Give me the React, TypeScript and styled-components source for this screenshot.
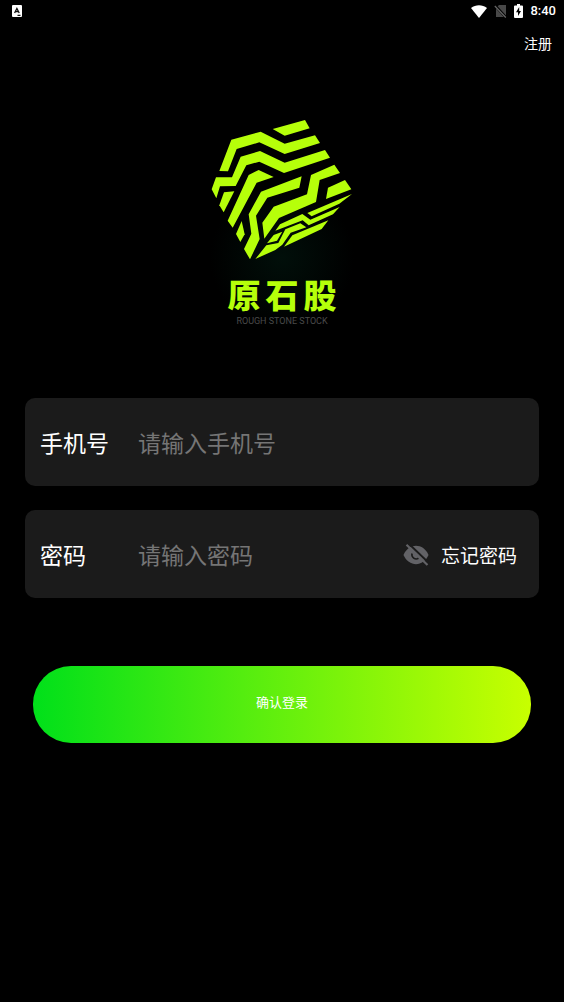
import React, { useState } from "react";
import styled, { createGlobalStyle } from "styled-components";

const GlobalStyle = createGlobalStyle`
  * { box-sizing: border-box; }
  body {
    margin: 0;
    background: #000;
    color: #fff;
    font-family: Roboto, "Noto Sans CJK SC", sans-serif;
  }
`;

const Page = styled.div`
  min-height: 100vh;
  display: flex;
  flex-direction: column;
`;

const StatusBar = styled.div`
  display: flex;
  align-items: center;
  justify-content: space-between;
  height: 22px;
  padding: 0 8px 0 12px;
`;

const StatusGroup = styled.div`
  display: flex;
  align-items: center;
  gap: 7px;
`;

const Clock = styled.time`
  font-size: 13px;
  line-height: 22px;
  font-weight: 500;
`;

const Header = styled.header`
  display: flex;
  justify-content: flex-end;
  height: 44px;
  padding: 12px 12px 0;
`;

const TextLink = styled.a<{ $size: number }>`
  flex: none;
  color: #fff;
  font-size: ${(p) => p.$size}px;
  line-height: 20px;
  text-decoration: none;
`;

const Brand = styled.div`
  display: flex;
  flex-direction: column;
  align-items: center;
  padding-top: 49px;
  background: radial-gradient(circle at 50% 192px, #010f0a 0, #000 72px);
`;

const BrandName = styled.h1`
  display: flex;
  gap: 5px;
  margin: 9px 0 0;
  color: #b6ff0a;
  font-size: 33px;
  line-height: 40px;
  font-weight: 900;
  font-family: "Noto Sans CJK SC", sans-serif;
`;

const BrandCaption = styled.p`
  margin: 0;
  color: #4a4a4a;
  font-size: 9px;
  line-height: 14px;
`;

const Form = styled.form`
  display: flex;
  flex-direction: column;
  gap: 24px;
  padding: 70px 25px 0;
`;

const Field = styled.div`
  display: flex;
  align-items: center;
  height: 88px;
  padding: 5px 22px 0 15px;
  border-radius: 10px;
  background: #1b1b1b;
`;

const FieldLabel = styled.label`
  flex: none;
  width: 98px;
  font-size: 23px;
  line-height: 32px;
`;

const FieldInput = styled.input`
  flex: 1;
  min-width: 0;
  height: 40px;
  padding: 0;
  border: 0;
  outline: 0;
  background: transparent;
  color: #fff;
  font: inherit;
  font-size: 23px;
  &::placeholder {
    color: #757575;
    opacity: 1;
  }
`;

const IconButton = styled.button`
  display: flex;
  flex: none;
  margin-right: 12px;
  padding: 0 0 4px;
  border: 0;
  background: none;
`;

const SubmitButton = styled.button`
  height: 77px;
  margin: 44px 8px 0;
  padding: 0 0 6px;
  border: 0;
  border-radius: 38px;
  background: linear-gradient(90deg, #00e01a, #c8ff00);
  color: #fff;
  font: inherit;
  font-size: 13px;
`;

const logoShapes = [
  "203,42 300,15 314,40 239,62",
  "79,74 167,50 239,86 330,61 345,84 239,117 163,82 95,102 69,169 43,168",
  "33,187 81,187 107,125 165,108 239,143 360,105 375,128 237,174 163,140 124,151 92,213 45,214 34,250 20,223",
  "68,317 131,180 161,165 206,186 155,203 83,338",
  "57,232 88,229 56,292 43,271",
  "93,357 110,318 119,358 106,381",
  "290,184 283,218 187,248 153,302 164,372 135,433 117,402 139,356 131,298 168,230",
  "318,180 388,149 405,174 344,195 333,261 222,309 178,371 172,323 206,275 306,238",
  "369,218 420,195 439,223 363,252",
  "307,294 441,237 403,266 320,304",
  "225,328 292,297 316,314 404,276 384,298 311,331 293,316 211,347",
  "151,432 184,391 220,384 241,343 286,325 304,337 257,353 232,389 211,405",
  "186,385 206,360 232,350 216,377",
  "237,395 262,361 370,316 350,342",
];

const Logo = () => (
  <svg width="155" height="150" viewBox="0 0 465 450" fill="#b6ff0a" aria-hidden="true">
    {logoShapes.map((points) => (
      <polygon key={points} points={points} />
    ))}
  </svg>
);

const AppIcon = () => (
  <svg width="10" height="12" viewBox="0 0 10 12" aria-hidden="true">
    <rect width="10" height="12" rx="1" fill="#fff" />
    <path d="M2.6 8 4.9 3.4 7.2 8M3.6 6.6h2.8M5.5 10.4h3" fill="none" stroke="#111" strokeWidth="1.3" />
  </svg>
);

const WifiIcon = () => (
  <svg width="16" height="13" viewBox="0 0 16 13" fill="#fff" aria-hidden="true">
    <path d="M0 3C4.700-.6 11.300-.6 16 3L8 13z" />
  </svg>
);

const NoSimIcon = () => (
  <svg width="13" height="14" viewBox="0 0 13 14" aria-hidden="true">
    <path d="M5 1h7v12H2V4z" fill="#484848" />
    <path d="M1 1.500 12 13.500" stroke="#000" strokeWidth="2.600" />
    <path d="M.8 2 11.800 13.500" stroke="#666" strokeWidth="1.200" />
  </svg>
);

const BatteryIcon = () => (
  <svg width="9" height="14" viewBox="0 0 9 14" aria-hidden="true">
    <path d="M3 0h3v1.500h2q1 0 1 1V13q0 1-1 1H1q-1 0-1-1V2.500q0-1 1-1h2z" fill="#fff" />
    <path d="M5.200 3 2 8.300h2v3.700L7 7H5.200z" fill="#000" />
  </svg>
);

const EyeOffIcon = () => (
  <svg width="26" height="22" viewBox="0 0 26 22" aria-hidden="true">
    <path d="M.5 11C3 5 8 1.800 13 1.800S23 5 25.500 11C23 17 18 20.200 13 20.200S3 17 .5 11z" fill="#626266" />
    <path d="M9 9.500a4.400 4.400 0 0 0 6.500 4.800" fill="none" stroke="#1b1b1b" strokeWidth="1.600" />
    <path d="M5-1 27 20" stroke="#1b1b1b" strokeWidth="2" />
    <path d="M3.500.8 24.500 21" stroke="#626266" strokeWidth="2.200" />
  </svg>
);

export default function App() {
  const [visible, setVisible] = useState(false);
  return (
    <Page>
      <GlobalStyle />
      <StatusBar>
        <AppIcon />
        <StatusGroup>
          <WifiIcon />
          <NoSimIcon />
          <BatteryIcon />
          <Clock>8:40</Clock>
        </StatusGroup>
      </StatusBar>
      <Header>
        <TextLink href="#register" $size={14}>注册</TextLink>
      </Header>
      <main>
        <Brand>
          <Logo />
          <BrandName>
            <span>原</span>
            <span>石</span>
            <span>股</span>
          </BrandName>
          <BrandCaption>ROUGH STONE STOCK</BrandCaption>
        </Brand>
        <Form onSubmit={(e) => e.preventDefault()}>
          <Field>
            <FieldLabel htmlFor="phone">手机号</FieldLabel>
            <FieldInput id="phone" type="tel" placeholder="请输入手机号" />
          </Field>
          <Field>
            <FieldLabel htmlFor="password">密码</FieldLabel>
            <FieldInput id="password" type={visible ? "text" : "password"} placeholder="请输入密码" />
            <IconButton type="button" aria-label="显示密码" onClick={() => setVisible(!visible)}>
              <EyeOffIcon />
            </IconButton>
            <TextLink href="#forgot" $size={19}>忘记密码</TextLink>
          </Field>
          <SubmitButton type="submit">确认登录</SubmitButton>
        </Form>
      </main>
    </Page>
  );
}
